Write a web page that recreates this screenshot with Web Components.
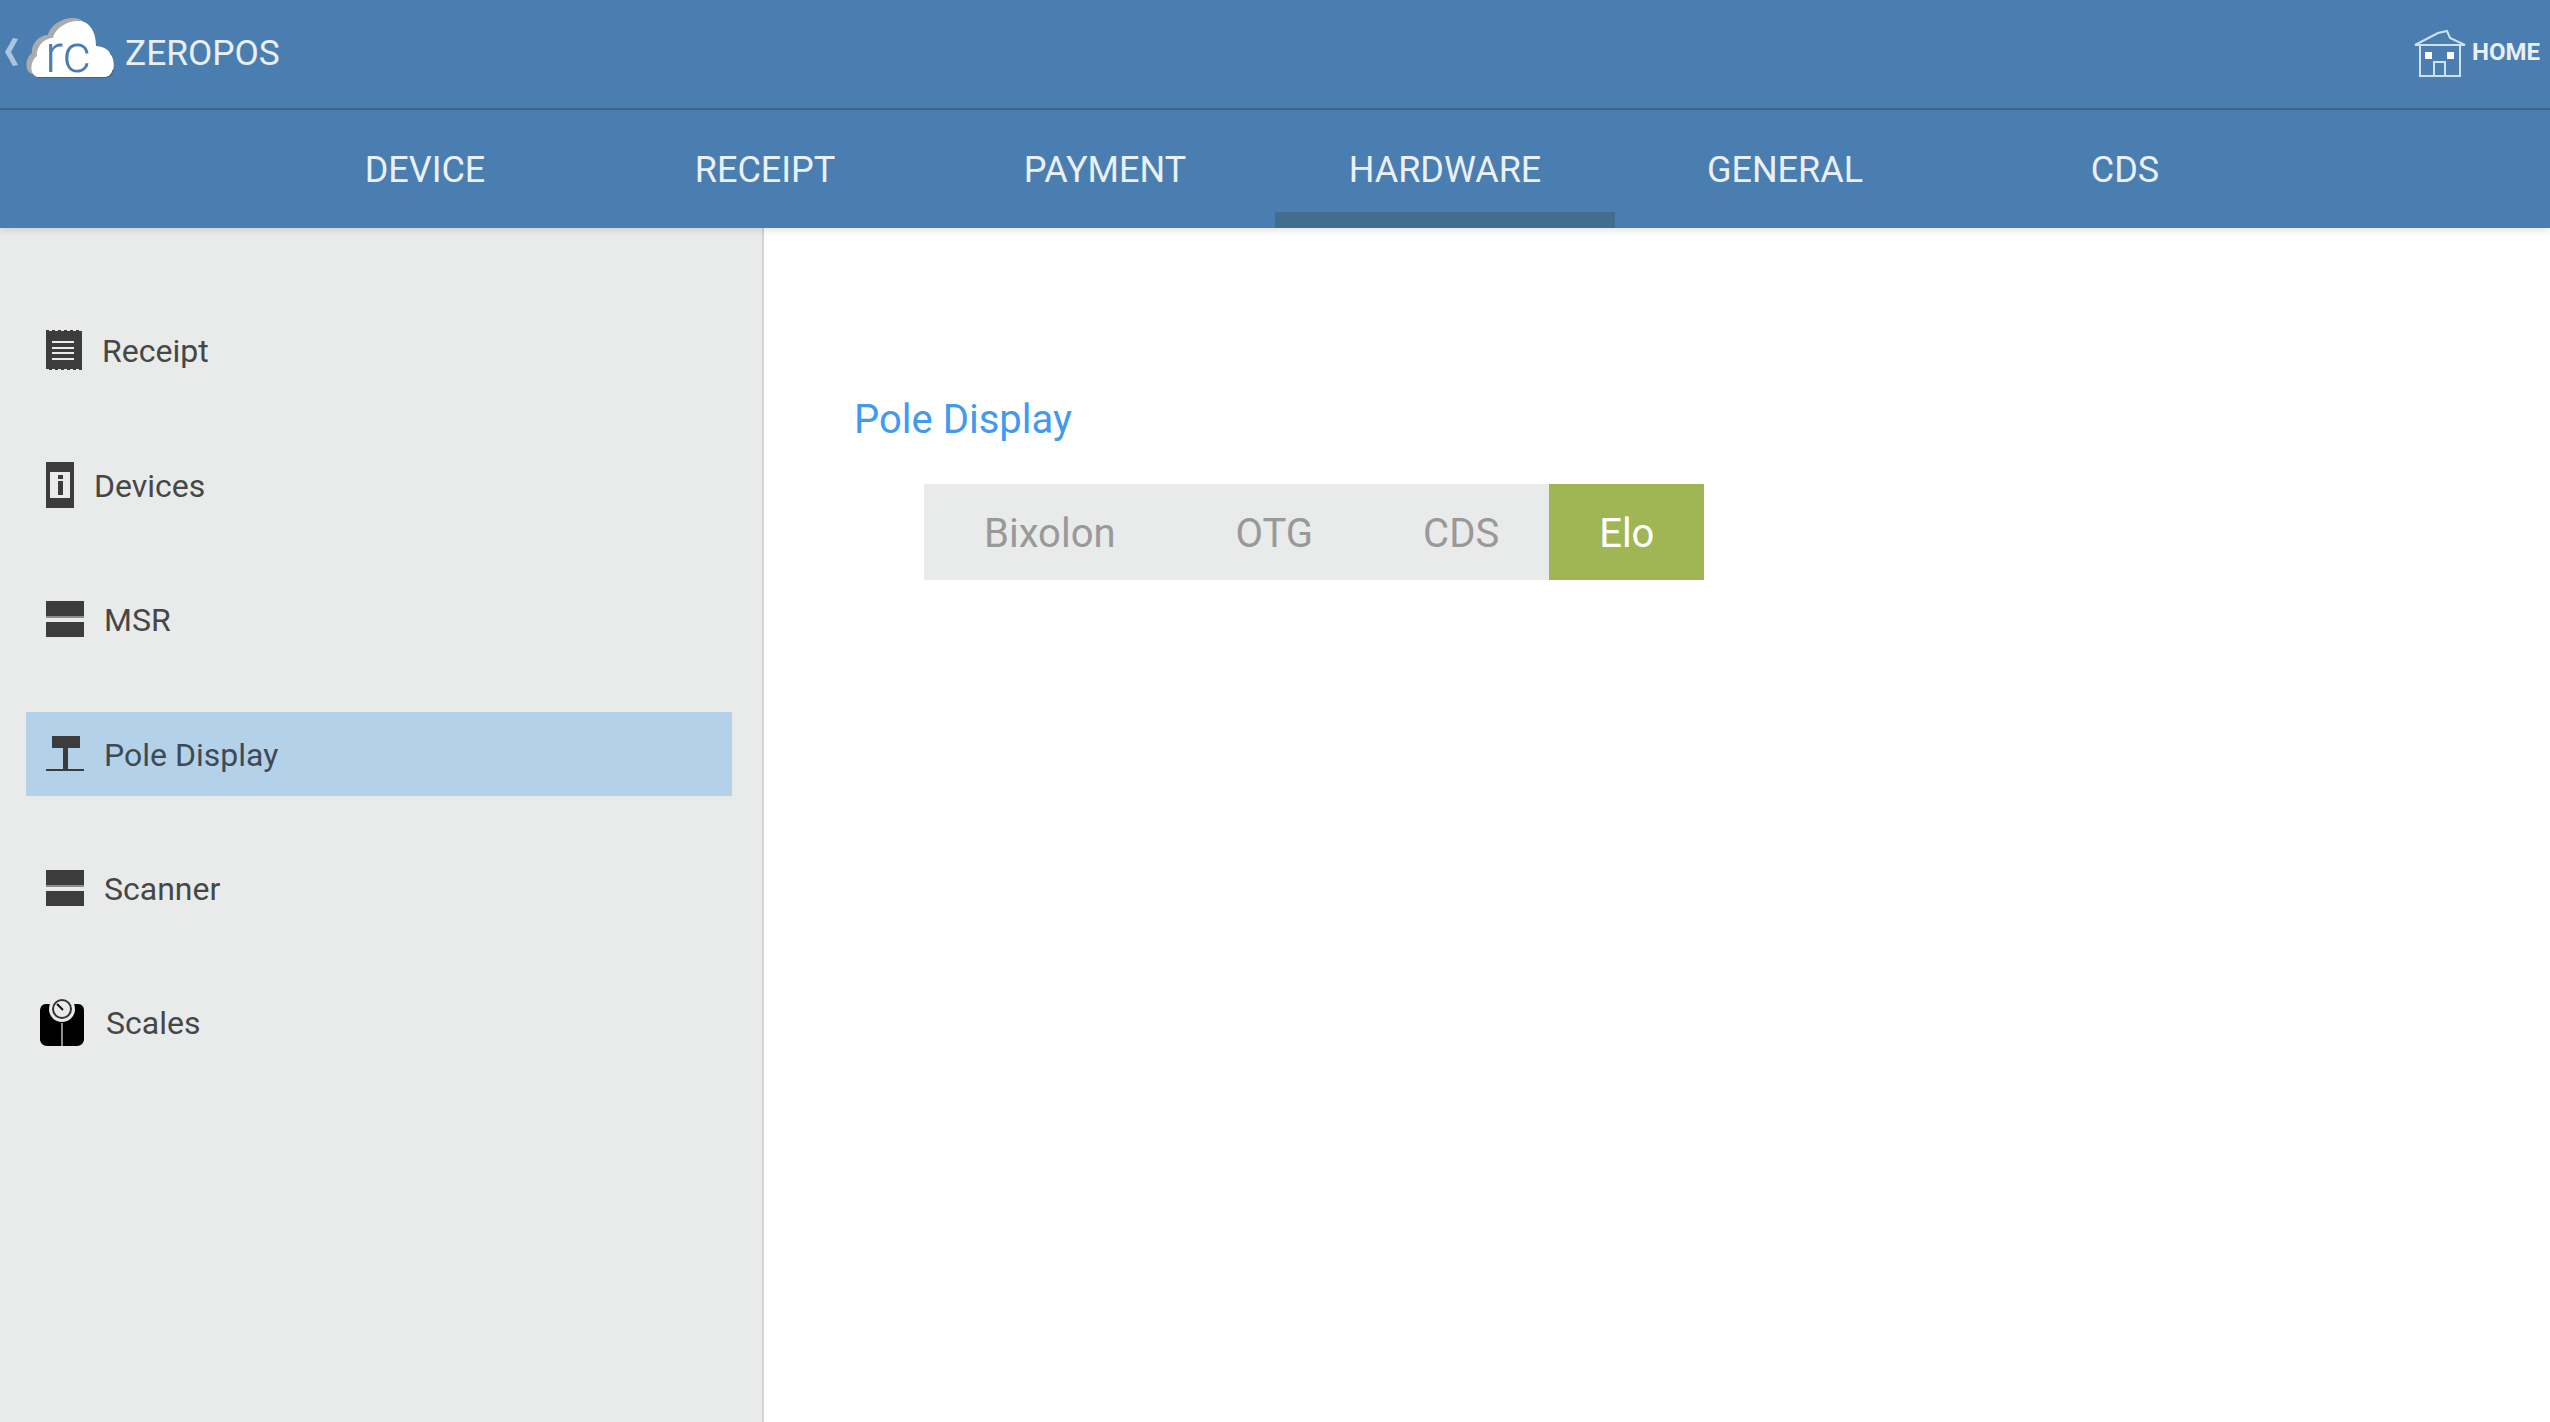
<!DOCTYPE html>
<html>
<head>
<meta charset="utf-8">
<style>
  html, body { margin: 0; height: 100%; overflow: hidden; background: #fff; font-family: Roboto, "Liberation Sans", sans-serif; }
  #app { display: flex; flex-direction: column; height: 1422px; }
  .body { flex: 1; display: flex; min-height: 0; }
</style>
</head>
<body>
<div id="app">
  <zero-header></zero-header>
  <zero-tabs active="HARDWARE" items="DEVICE,RECEIPT,PAYMENT,HARDWARE,GENERAL,CDS"></zero-tabs>
  <div class="body">
    <side-nav>
      <nav-item icon="receipt" gap="20">Receipt</nav-item>
      <nav-item icon="devices" gap="20">Devices</nav-item>
      <nav-item icon="bars" gap="20">MSR</nav-item>
      <nav-item icon="pole" gap="20" selected>Pole Display</nav-item>
      <nav-item icon="bars" gap="20">Scanner</nav-item>
      <nav-item icon="scales" gap="22">Scales</nav-item>
    </side-nav>
    <settings-panel heading="Pole Display">
      <seg-control active="Elo" items="Bixolon,OTG,CDS,Elo"></seg-control>
    </settings-panel>
  </div>
</div>

<script>
class ZeroHeader extends HTMLElement {
  connectedCallback() {
    const shadow = this.shadowRoot || this.attachShadow({ mode: 'open' });
    shadow.innerHTML = `
      <style>
        :host {
          display: flex;
          align-items: center;
          justify-content: space-between;
          height: 108px;
          background: #4a7eb1;
          border-bottom: 2px solid #3a6489;
          color: #fff;
          position: relative;
          z-index: 3;
        }
        .left, .right { display: flex; align-items: center; }
        .left { padding-left: 4px; }
        .right { padding-right: 10px; }
        .title { font-size: 35.300px; color: #e8eff6; margin-left: 10px; line-height: 1; }
        .home { font-size: 24px; font-weight: 700; color: #e8eff6; margin-left: 6px; position: relative; top: -2px; }
        svg { display: block; }
        .chev { margin-top: -5px; }
        .logo { margin-left: 5px; }
      </style>
      <div class="left">
        <svg class="chev" width="15" height="28" viewBox="0 0 15 28"><path d="M14 1 L9 0 L1 14 L9 28 L14 27 L7 14 Z" fill="#a9c5e0"/></svg>
        <svg class="logo" width="91" height="76" viewBox="24 16 91 76">
          <path transform="translate(-5 -3)" d="M38 77 C30 76 29 62 37 56 C36 46 45 38 53 38 C55 28 68 20 80 21 C90 22 96 32 96 46 L60 70 Z" fill="#ababab"/>
          <path d="M38 77 C30 76 29 62 37 56 C36 46 45 38 53 38 C55 28 68 20 80 21 C90 22 96 32 96 46 C102 46 110 50 110 54 C114 57 115 68 112 72 C110 76 108 77 105 77 Z" fill="#fff"/>
          <path d="M38 77.500 H105 C109 77.500 112 75 113 70" fill="none" stroke="#51606d" stroke-width="1.200"/>
          <text x="45" y="72" font-family="Roboto, sans-serif" font-weight="300" font-size="54" fill="#4a7eb1">rc</text>
        </svg>
        <span class="title">ZEROPOS</span>
      </div>
      <div class="right">
        <svg width="52" height="50" viewBox="0 0 52 50" fill="none" stroke="#cfe0ef" stroke-width="2">
          <path d="M1 16 L24 4 L33 2 L36 9 L51 16 Z"/>
          <path d="M6 16 V47 H46 V16"/>
          <path d="M20 47 V33 H31 V47"/>
          <rect x="11" y="23" width="7" height="7" fill="#fff" stroke="none"/>
          <rect x="33" y="23" width="7" height="7" fill="#fff" stroke="none"/>
        </svg>
        <span class="home">HOME</span>
      </div>
    `;
  }
}

class ZeroTabs extends HTMLElement {
  connectedCallback() {
    const items = (this.getAttribute('items') || '').split(',');
    const active = this.getAttribute('active');
    const shadow = this.shadowRoot || this.attachShadow({ mode: 'open' });
    shadow.innerHTML = `
      <style>
        :host {
          display: flex;
          justify-content: center;
          height: 118px;
          background: #4a7eb1;
          box-shadow: 0 2px 8px rgba(0,0,0,.12);
          position: relative;
          z-index: 2;
        }
        .tab {
          box-sizing: border-box;
          width: 340px;
          display: flex;
          align-items: center;
          justify-content: center;
          padding-top: 2px;
          font-size: 36px;
          color: #eaf0f7;
        }
        .tab.on { box-shadow: inset 0 -16px 0 #426d8e; }
      </style>
      ${items.map(t => `<div class="tab ${t === active ? 'on' : ''}">${t}</div>`).join('')}
    `;
  }
}

class SideNav extends HTMLElement {
  connectedCallback() {
    const shadow = this.shadowRoot || this.attachShadow({ mode: 'open' });
    shadow.innerHTML = `
      <style>
        :host {
          display: flex;
          flex-direction: column;
          box-sizing: border-box;
          width: 764px;
          flex: none;
          padding: 80.400px 30px 0 26px;
          gap: 50.400px;
          background: #e9ebea;
          border-right: 2px solid #d2d4d3;
        }
      </style>
      <slot></slot>
    `;
  }
}

const ICONS = {
  receipt: `<svg width="36" height="40" viewBox="0 0 36 40">
      <path d="M0 0 H3 V1 H6 V0 H9 V1 H12 V0 H15 V1 H18 V0 H21 V1 H24 V0 H27 V1 H30 V0 H33 V1 H36 V40 H33 V39 H30 V40 H27 V39 H24 V40 H21 V39 H18 V40 H15 V39 H12 V40 H9 V39 H6 V40 H3 V39 H0 Z" fill="#3c3c3c"/>
      <path d="M6 12 H28 M6 18 H28 M6 23 H28 M6 29 H28" stroke="#e9ebea" stroke-width="2"/>
    </svg>`,
  devices: `<svg width="28" height="46" viewBox="0 0 28 46">
      <rect width="28" height="46" fill="#3c3c3c"/>
      <rect x="4" y="10" width="20" height="26" fill="#e9ebea"/>
      <rect x="12" y="13" width="5" height="4" fill="#3c3c3c"/>
      <rect x="12" y="19" width="5" height="14" fill="#3c3c3c"/>
    </svg>`,
  bars: `<svg width="38" height="36" viewBox="0 0 38 36">
      <rect width="38" height="15" fill="#3c3c3c"/>
      <rect y="21" width="38" height="15" fill="#3c3c3c"/>
      <rect y="15" width="38" height="2" fill="#8d8e8e"/>
    </svg>`,
  pole: `<svg width="38" height="36" viewBox="0 0 38 36">
      <rect x="6" width="28" height="12" fill="#3c3c3c"/>
      <rect x="17" y="12" width="5" height="21" fill="#3c3c3c"/>
      <rect y="33" width="38" height="2" fill="#3c3c3c"/>
    </svg>`,
  scales: `<svg width="44" height="48" viewBox="0 0 44 48">
      <path d="M6 6 H38 C42 6 44 9 44 13 L44 41 C44 45 41 48 37 48 H7 C3 48 0 45 0 41 L0 13 C0 9 2 6 6 6 Z" fill="#000"/>
      <circle cx="22" cy="11" r="13" fill="#e9ebea"/>
      <circle cx="22" cy="11" r="9" fill="none" stroke="#333" stroke-width="2"/>
      <path d="M17 6 L23 12" stroke="#111" stroke-width="2"/>
      <rect x="21" y="25" width="2" height="23" fill="#8d8e8e"/>
    </svg>`
};

class NavItem extends HTMLElement {
  connectedCallback() {
    const name = this.getAttribute('icon');
    const gap = this.getAttribute('gap') || 20;
    // the scale glyph sits a little further left than the others
    const left = name === 'scales' ? 14 : 20;
    const shadow = this.shadowRoot || this.attachShadow({ mode: 'open' });
    shadow.innerHTML = `
      <style>
        :host {
          display: flex;
          align-items: center;
          height: 84px;
          padding-left: ${left}px;
          gap: ${gap}px;
          font-size: 32px;
          color: #454747;
        }
        :host([selected]) { background: #b3d2ea; color: #3f4a54; }
        svg { display: block; flex: none; }
        .label { padding-top: 2px; }
      </style>
      ${ICONS[name] || ''}
      <span class="label"><slot></slot></span>
    `;
  }
}

class SettingsPanel extends HTMLElement {
  connectedCallback() {
    const heading = this.getAttribute('heading') || '';
    const shadow = this.shadowRoot || this.attachShadow({ mode: 'open' });
    shadow.innerHTML = `
      <style>
        :host {
          display: block;
          flex: 1;
          padding: 162px 0 0 90px;
          background: #fff;
        }
        h2 {
          margin: 0 0 34px;
          font-weight: 400;
          font-size: 40px;
          line-height: 60px;
          color: #4299f0;
        }
        .items { padding-left: 70px; }
      </style>
      <h2>${heading}</h2>
      <div class="items"><slot></slot></div>
    `;
  }
}

class SegControl extends HTMLElement {
  connectedCallback() {
    const items = (this.getAttribute('items') || '').split(',');
    const active = this.getAttribute('active');
    const shadow = this.shadowRoot || this.attachShadow({ mode: 'open' });
    shadow.innerHTML = `
      <style>
        :host {
          display: inline-flex;
          height: 96px;
          background: #e9eaea;
          font-size: 40px;
          color: #999;
        }
        .seg { display: flex; align-items: center; padding: 2px 50px 0 60px; }
        .seg:first-of-type { padding-right: 60px; }
        .seg.on { background: #a0b654; color: #fff; padding: 2px 50px 0; }
      </style>
      ${items.map(t => `<div class="seg ${t === active ? 'on' : ''}">${t}</div>`).join('')}
    `;
  }
}

customElements.define('zero-header', ZeroHeader);
customElements.define('zero-tabs', ZeroTabs);
customElements.define('side-nav', SideNav);
customElements.define('nav-item', NavItem);
customElements.define('settings-panel', SettingsPanel);
customElements.define('seg-control', SegControl);
</script>
</body>
</html>
